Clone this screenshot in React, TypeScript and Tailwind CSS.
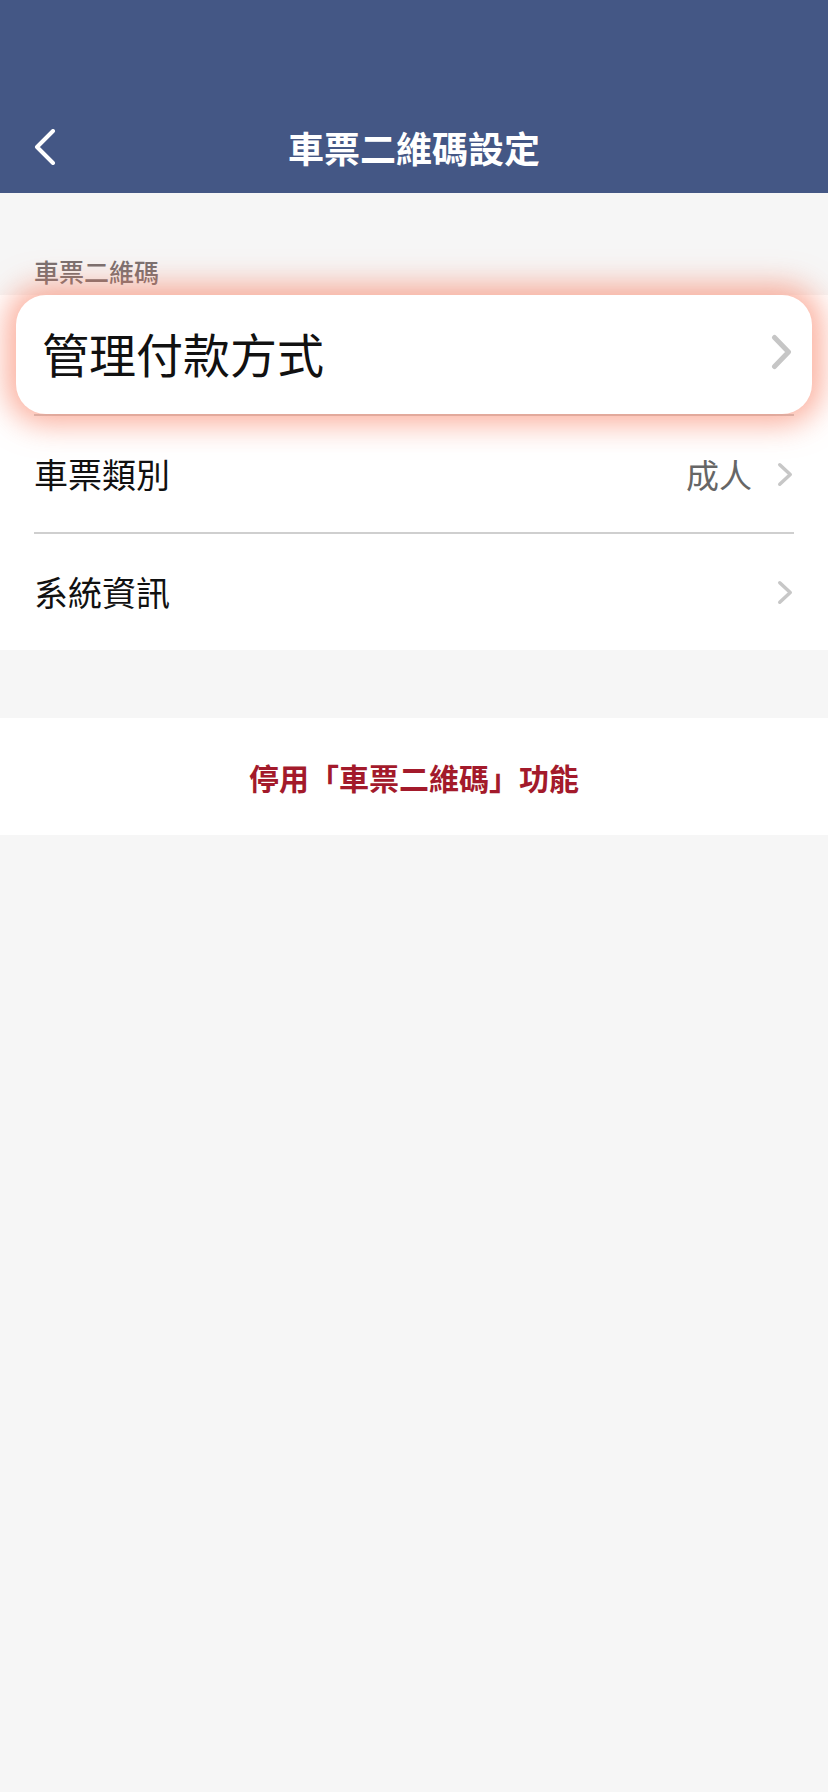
const font = "font-['Noto_Sans_CJK_TC','Noto_Sans',sans-serif]";

function Chevron({ w, h, sw, color }: { w: number; h: number; sw: number; color: string }) {
  return (
    <svg width={w} height={h} viewBox={`0 0 ${w} ${h}`} fill="none">
      <polyline
        points={`${sw / 2 + 1},${sw / 2 + 1} ${w - sw / 2 - 1},${h / 2} ${sw / 2 + 1},${h - sw / 2 - 1}`}
        stroke={color}
        strokeWidth={sw}
        strokeLinecap="round"
        strokeLinejoin="round"
      />
    </svg>
  );
}

function BackIcon() {
  return (
    <svg width="22" height="36" viewBox="0 0 22 36" fill="none">
      <polyline
        points="19,2 3,18 19,34"
        stroke="#ffffff"
        strokeWidth="4"
        strokeLinecap="round"
        strokeLinejoin="round"
      />
    </svg>
  );
}

function Row({ label, value }: { label: string; value?: string }) {
  return (
    <div className="flex h-[116px] items-center justify-between pl-[34px] pr-[35px]">
      <span className="text-[34px] leading-none text-[#111111]">{label}</span>
      <div className="flex items-center gap-[25px]">
        {value && <span className="text-[33px] leading-none text-[#666666]">{value}</span>}
        <Chevron w={16} h={25} sw={3.5} color="#c7c7c7" />
      </div>
    </div>
  );
}

export default function App() {
  return (
    <div className={`${font} min-h-[1792px] w-full bg-[#f6f6f6]`}>
      {/* header */}
      <div className="h-[193px] bg-[#445785] pt-[100px]">
        <div className="relative flex h-[93px] items-center justify-center">
          <div className="absolute left-[34px] top-1/2 -translate-y-1/2">
            <BackIcon />
          </div>
          <span className="text-[36px] font-bold leading-none text-white">車票二維碼設定</span>
        </div>
      </div>

      {/* section label */}
      <div className="flex h-[102px] items-end pb-[11px] pl-[34px]">
        <span className="text-[25px] font-medium leading-none text-[#777070]">車票二維碼</span>
      </div>

      {/* list */}
      <div className="bg-white pt-[3px]">
        <div className="relative z-10 -mt-[3px] mx-[16px] flex h-[119px] items-center justify-between rounded-[30px] bg-white pb-[5px] pl-[26px] pr-[20px] shadow-[0_0_30px_10px_rgba(248,120,90,0.6)]">
          <span className="text-[47px] leading-none text-[#111111]">管理付款方式</span>
          <Chevron w={21} h={36} sw={5} color="#c6c6c6" />
        </div>
        <div className="mx-[34px] h-[2px] bg-[#cfcfcf]" />
        <Row label="車票類別" value="成人" />
        <div className="mx-[34px] h-[2px] bg-[#cfcfcf]" />
        <Row label="系統資訊" />
      </div>

      {/* disable button */}
      <div className="mt-[68px] flex h-[117px] items-center justify-center bg-white">
        <span className="text-[30px] font-bold leading-none text-[#a31a2b]">停用「車票二維碼」功能</span>
      </div>
    </div>
  );
}
